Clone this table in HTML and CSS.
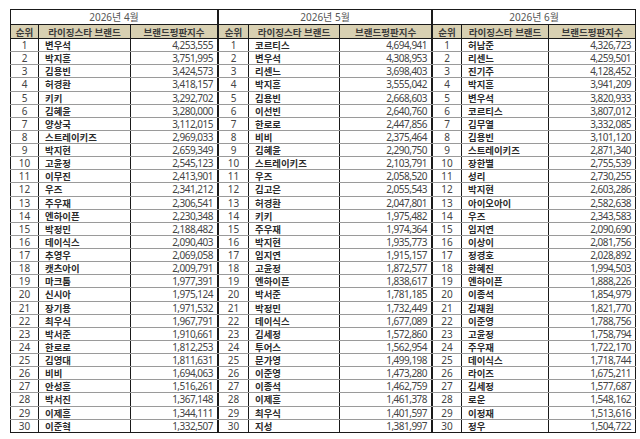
FILE: index.html
```html
<!DOCTYPE html>
<html lang="ko">
<head>
<meta charset="utf-8">
<title>라이징스타 브랜드평판</title>
<link rel="stylesheet" href="styles.css">
</head>
<body>
<div class="sheet">
<table class="rank t1">
<colgroup><col class="c-rank"><col class="c-name"><col class="c-score"></colgroup>
<thead>
<tr class="title"><th colspan="3">2026년 4월</th></tr>
<tr class="head"><th>순위</th><th>라이징스타 브랜드</th><th>브랜드평판지수</th></tr>
</thead>
<tbody>
<tr><td class="n">1</td><td class="b">변우석</td><td class="s">4,253,555</td></tr>
<tr><td class="n">2</td><td class="b">박지훈</td><td class="s">3,751,995</td></tr>
<tr><td class="n">3</td><td class="b">김용빈</td><td class="s">3,424,573</td></tr>
<tr><td class="n">4</td><td class="b">허경환</td><td class="s">3,418,157</td></tr>
<tr><td class="n">5</td><td class="b">키키</td><td class="s">3,292,702</td></tr>
<tr><td class="n">6</td><td class="b">김혜윤</td><td class="s">3,280,000</td></tr>
<tr><td class="n">7</td><td class="b">양상국</td><td class="s">3,112,015</td></tr>
<tr><td class="n">8</td><td class="b">스트레이키즈</td><td class="s">2,969,033</td></tr>
<tr><td class="n">9</td><td class="b">박지현</td><td class="s">2,659,349</td></tr>
<tr><td class="n">10</td><td class="b">고윤정</td><td class="s">2,545,123</td></tr>
<tr><td class="n">11</td><td class="b">이무진</td><td class="s">2,413,901</td></tr>
<tr><td class="n">12</td><td class="b">우즈</td><td class="s">2,341,212</td></tr>
<tr><td class="n">13</td><td class="b">주우재</td><td class="s">2,306,541</td></tr>
<tr><td class="n">14</td><td class="b">엔하이픈</td><td class="s">2,230,348</td></tr>
<tr><td class="n">15</td><td class="b">박정민</td><td class="s">2,188,482</td></tr>
<tr><td class="n">16</td><td class="b">데이식스</td><td class="s">2,090,403</td></tr>
<tr><td class="n">17</td><td class="b">추영우</td><td class="s">2,069,058</td></tr>
<tr><td class="n">18</td><td class="b">캣츠아이</td><td class="s">2,009,791</td></tr>
<tr><td class="n">19</td><td class="b">마크툽</td><td class="s">1,977,391</td></tr>
<tr><td class="n">20</td><td class="b">신시아</td><td class="s">1,975,124</td></tr>
<tr><td class="n">21</td><td class="b">장기용</td><td class="s">1,971,532</td></tr>
<tr><td class="n">22</td><td class="b">최우식</td><td class="s">1,967,791</td></tr>
<tr><td class="n">23</td><td class="b">박서준</td><td class="s">1,910,661</td></tr>
<tr><td class="n">24</td><td class="b">한로로</td><td class="s">1,812,253</td></tr>
<tr><td class="n">25</td><td class="b">김영대</td><td class="s">1,811,631</td></tr>
<tr><td class="n">26</td><td class="b">비비</td><td class="s">1,694,063</td></tr>
<tr><td class="n">27</td><td class="b">안성훈</td><td class="s">1,516,261</td></tr>
<tr><td class="n">28</td><td class="b">박서진</td><td class="s">1,367,148</td></tr>
<tr><td class="n">29</td><td class="b">이제훈</td><td class="s">1,344,111</td></tr>
<tr><td class="n">30</td><td class="b">이준혁</td><td class="s">1,332,507</td></tr>
</tbody>
</table>
<table class="rank t2">
<colgroup><col class="c-rank"><col class="c-name"><col class="c-score"></colgroup>
<thead>
<tr class="title"><th colspan="3">2026년 5월</th></tr>
<tr class="head"><th>순위</th><th>라이징스타 브랜드</th><th>브랜드평판지수</th></tr>
</thead>
<tbody>
<tr><td class="n">1</td><td class="b">코르티스</td><td class="s">4,694,941</td></tr>
<tr><td class="n">2</td><td class="b">변우석</td><td class="s">4,308,953</td></tr>
<tr><td class="n">3</td><td class="b">리센느</td><td class="s">3,698,403</td></tr>
<tr><td class="n">4</td><td class="b">박지훈</td><td class="s">3,555,042</td></tr>
<tr><td class="n">5</td><td class="b">김용빈</td><td class="s">2,668,603</td></tr>
<tr><td class="n">6</td><td class="b">이선빈</td><td class="s">2,640,760</td></tr>
<tr><td class="n">7</td><td class="b">한로로</td><td class="s">2,447,856</td></tr>
<tr><td class="n">8</td><td class="b">비비</td><td class="s">2,375,464</td></tr>
<tr><td class="n">9</td><td class="b">김혜윤</td><td class="s">2,290,750</td></tr>
<tr><td class="n">10</td><td class="b">스트레이키즈</td><td class="s">2,103,791</td></tr>
<tr><td class="n">11</td><td class="b">우즈</td><td class="s">2,058,520</td></tr>
<tr><td class="n">12</td><td class="b">김고은</td><td class="s">2,055,543</td></tr>
<tr><td class="n">13</td><td class="b">허경환</td><td class="s">2,047,801</td></tr>
<tr><td class="n">14</td><td class="b">키키</td><td class="s">1,975,482</td></tr>
<tr><td class="n">15</td><td class="b">주우재</td><td class="s">1,974,364</td></tr>
<tr><td class="n">16</td><td class="b">박지현</td><td class="s">1,935,773</td></tr>
<tr><td class="n">17</td><td class="b">임지연</td><td class="s">1,915,157</td></tr>
<tr><td class="n">18</td><td class="b">고윤정</td><td class="s">1,872,577</td></tr>
<tr><td class="n">19</td><td class="b">엔하이픈</td><td class="s">1,838,617</td></tr>
<tr><td class="n">20</td><td class="b">박서준</td><td class="s">1,781,185</td></tr>
<tr><td class="n">21</td><td class="b">박정민</td><td class="s">1,732,449</td></tr>
<tr><td class="n">22</td><td class="b">데이식스</td><td class="s">1,677,089</td></tr>
<tr><td class="n">23</td><td class="b">김세정</td><td class="s">1,572,860</td></tr>
<tr><td class="n">24</td><td class="b">투어스</td><td class="s">1,562,954</td></tr>
<tr><td class="n">25</td><td class="b">문가영</td><td class="s">1,499,198</td></tr>
<tr><td class="n">26</td><td class="b">이준영</td><td class="s">1,473,280</td></tr>
<tr><td class="n">27</td><td class="b">이종석</td><td class="s">1,462,759</td></tr>
<tr><td class="n">28</td><td class="b">이제훈</td><td class="s">1,461,378</td></tr>
<tr><td class="n">29</td><td class="b">최우식</td><td class="s">1,401,597</td></tr>
<tr><td class="n">30</td><td class="b">지성</td><td class="s">1,381,997</td></tr>
</tbody>
</table>
<table class="rank t3">
<colgroup><col class="c-rank"><col class="c-name"><col class="c-score"></colgroup>
<thead>
<tr class="title"><th colspan="3">2026년 6월</th></tr>
<tr class="head"><th>순위</th><th>라이징스타 브랜드</th><th>브랜드평판지수</th></tr>
</thead>
<tbody>
<tr><td class="n">1</td><td class="b">허남준</td><td class="s">4,326,723</td></tr>
<tr><td class="n">2</td><td class="b">리센느</td><td class="s">4,259,501</td></tr>
<tr><td class="n">3</td><td class="b">진기주</td><td class="s">4,128,452</td></tr>
<tr><td class="n">4</td><td class="b">박지훈</td><td class="s">3,941,209</td></tr>
<tr><td class="n">5</td><td class="b">변우석</td><td class="s">3,820,933</td></tr>
<tr><td class="n">6</td><td class="b">코르티스</td><td class="s">3,807,012</td></tr>
<tr><td class="n">7</td><td class="b">김무열</td><td class="s">3,332,085</td></tr>
<tr><td class="n">8</td><td class="b">김용빈</td><td class="s">3,101,120</td></tr>
<tr><td class="n">9</td><td class="b">스트레이키즈</td><td class="s">2,871,340</td></tr>
<tr><td class="n">10</td><td class="b">장한별</td><td class="s">2,755,539</td></tr>
<tr><td class="n">11</td><td class="b">성리</td><td class="s">2,730,255</td></tr>
<tr><td class="n">12</td><td class="b">박지현</td><td class="s">2,603,286</td></tr>
<tr><td class="n">13</td><td class="b">아이오아이</td><td class="s">2,582,638</td></tr>
<tr><td class="n">14</td><td class="b">우즈</td><td class="s">2,343,583</td></tr>
<tr><td class="n">15</td><td class="b">임지연</td><td class="s">2,090,690</td></tr>
<tr><td class="n">16</td><td class="b">이상이</td><td class="s">2,081,756</td></tr>
<tr><td class="n">17</td><td class="b">정경호</td><td class="s">2,028,892</td></tr>
<tr><td class="n">18</td><td class="b">한혜진</td><td class="s">1,994,503</td></tr>
<tr><td class="n">19</td><td class="b">엔하이픈</td><td class="s">1,888,226</td></tr>
<tr><td class="n">20</td><td class="b">이종석</td><td class="s">1,854,979</td></tr>
<tr><td class="n">21</td><td class="b">김재원</td><td class="s">1,821,770</td></tr>
<tr><td class="n">22</td><td class="b">이준영</td><td class="s">1,788,756</td></tr>
<tr><td class="n">23</td><td class="b">고윤정</td><td class="s">1,758,794</td></tr>
<tr><td class="n">24</td><td class="b">주우재</td><td class="s">1,722,170</td></tr>
<tr><td class="n">25</td><td class="b">데이식스</td><td class="s">1,718,744</td></tr>
<tr><td class="n">26</td><td class="b">라이즈</td><td class="s">1,675,211</td></tr>
<tr><td class="n">27</td><td class="b">김세정</td><td class="s">1,577,687</td></tr>
<tr><td class="n">28</td><td class="b">로운</td><td class="s">1,548,162</td></tr>
<tr><td class="n">29</td><td class="b">이정재</td><td class="s">1,513,616</td></tr>
<tr><td class="n">30</td><td class="b">정우</td><td class="s">1,504,722</td></tr>
</tbody>
</table>
</div>
</body>
</html>
```
FILE: styles.css
```css
html, body {
  margin: 0;
  padding: 0;
  background: #ffffff;
}

.sheet {
  display: flex;
  align-items: flex-start;
  padding: 9px 0 0 10px;
}

.rank {
  border-collapse: collapse;
  table-layout: fixed;
  border: 1px solid #1a1a1a;
  font-family: "Noto Sans", "Noto Sans CJK KR", sans-serif;
  color: #333333;
}

.t1 { width: 207px; }
.t1 .c-rank { width: 28px; }
.t1 .c-name { width: 92px; }
.t1 .c-score { width: 87px; }

.t2 { width: 213px; }
.t2 .c-rank { width: 30px; }
.t2 .c-name { width: 91px; }
.t2 .c-score { width: 92px; }

.t3 { width: 203px; }
.t3 .c-rank { width: 29px; }
.t3 .c-name { width: 87px; }
.t3 .c-score { width: 87px; }

.rank th,
.rank td {
  padding: 0;
  white-space: nowrap;
  overflow: hidden;
  line-height: 12px;
}

.title th {
  height: 14px;
  font-weight: 400;
  font-size: 10px;
  color: #555555;
  text-align: center;
  border-bottom: 1px solid #1a1a1a;
}

.head th {
  height: 13px;
  background: #d8d0b2;
  font-family: "Noto Sans CJK KR", sans-serif;
  font-weight: 700;
  font-size: 9.5px;
  color: #3a3a3a;
  text-align: center;
  border-left: 1px solid #1a1a1a;
  border-bottom: 1px solid #1a1a1a;
}

.rank tbody tr {
  height: 13.13px;
}

.rank td {
  border-left: 1px solid #1a1a1a;
  border-bottom: 1px solid #9a9a9a;
  font-size: 10px;
}

.rank tbody tr:last-child td {
  border-bottom: 1px solid #1a1a1a;
}

.n {
  text-align: center;
  color: #444444;
}

.b {
  padding-left: 6px !important;
  font-family: "Noto Sans CJK KR", sans-serif;
  font-weight: 700;
  font-size: 9.4px !important;
  color: #2a2a2a;
  text-align: left;
}

.s {
  padding-right: 4px !important;
  text-align: right;
  color: #444444;
  letter-spacing: -0.5px;
}
```
